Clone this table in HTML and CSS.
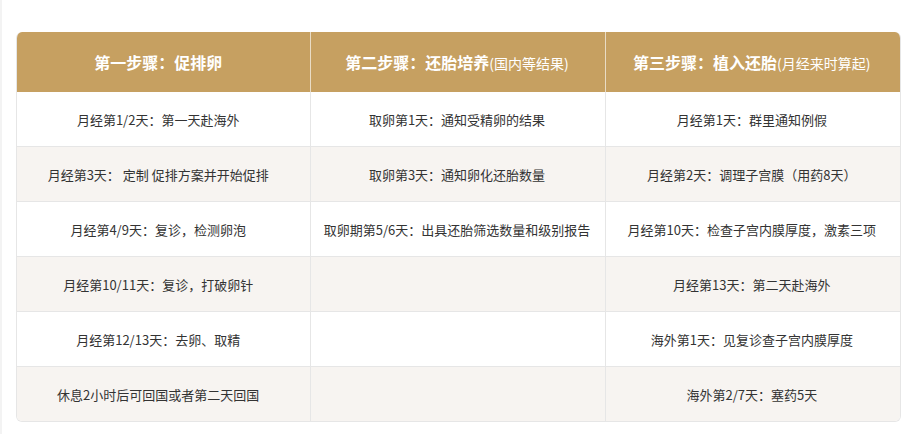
FILE: index.html
```html
<!DOCTYPE html>
<html lang="zh-CN">
<head>
<meta charset="utf-8">
<link rel="stylesheet" href="styles.css">
</head>
<body>
<div class="page">
  <table class="plan">
    <thead>
      <tr>
        <th>第一步骤：促排卵</th>
        <th>第二步骤：还胎培养<span class="sub">(国内等结果)</span></th>
        <th>第三步骤：植入还胎<span class="sub">(月经来时算起)</span></th>
      </tr>
    </thead>
    <tbody>
      <tr><td>月经第1/2天：第一天赴海外</td><td>取卵第1天：通知受精卵的结果</td><td>月经第1天：群里通知例假</td></tr>
      <tr><td>月经第3天： 定制 促排方案并开始促排</td><td>取卵第3天：通知卵化还胎数量</td><td>月经第2天：调理子宫膜（用药8天）</td></tr>
      <tr><td>月经第4/9天：复诊，检测卵泡</td><td>取卵期第5/6天：出具还胎筛选数量和级别报告</td><td>月经第10天：检查子宫内膜厚度，激素三项</td></tr>
      <tr><td>月经第10/11天：复诊，打破卵针</td><td></td><td>月经第13天：第二天赴海外</td></tr>
      <tr><td>月经第12/13天：去卵、取精</td><td></td><td>海外第1天：见复诊查子宫内膜厚度</td></tr>
      <tr><td>休息2小时后可回国或者第二天回国</td><td></td><td>海外第2/7天：塞药5天</td></tr>
    </tbody>
  </table>
</div>
</body>
</html>
```
FILE: styles.css
```css
html, body {
  margin: 0;
  padding: 0;
  background: #ffffff;
}
.page {
  border-left: 2px solid #f3f3f3;
  padding: 32px 0 0 14px;
  height: 402px;
  font-family: "Noto Sans CJK SC", "Microsoft YaHei", sans-serif;
}
.plan {
  width: 885px;
  table-layout: fixed;
  border-collapse: separate;
  border-spacing: 0;
  border: 1px solid #e6e6e6;
  border-top: none;
  border-radius: 6px;
  overflow: hidden;
}
.plan th {
  height: 60px;
  padding: 0 2px 0 0;
  background: #c6a061;
  color: #ffffff;
  font-size: 16px;
  font-weight: bold;
  text-align: center;
  vertical-align: middle;
  border-right: 1px solid #e9dcc5;
}
.plan th .sub {
  font-size: 14px;
  font-weight: normal;
}
.plan th:first-child,
.plan td:first-child {
  padding-right: 11px;
}
.plan th:last-child,
.plan td:last-child {
  border-right: none;
}
.plan td {
  height: 54px;
  padding: 0 2px 0 0;
  font-size: 13px;
  color: #333333;
  text-align: center;
  vertical-align: middle;
  border-right: 1px solid #e6e6e6;
  border-top: 1px solid #e6e6e6;
}
.plan tbody tr:first-child td {
  border-top: none;
}
.plan tbody tr:nth-child(even) td {
  background: #f7f4f1;
}
```
